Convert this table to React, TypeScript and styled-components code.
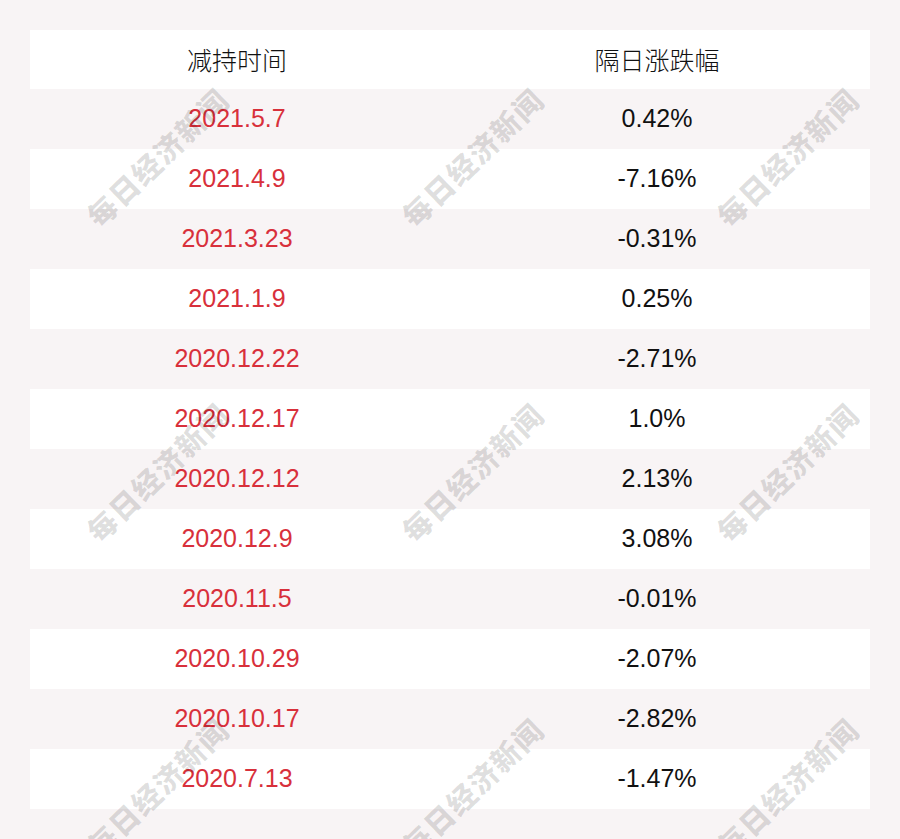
import React from "react";
import styled, { createGlobalStyle } from "styled-components";

const Global = createGlobalStyle`
  html, body { margin: 0; padding: 0; background: #f8f4f5; }
  body { font-family: "Liberation Sans", Arial, "Noto Sans CJK SC", sans-serif; }
`;

const Page = styled.div`
  position: relative;
  width: 900px;
  height: 839px;
  padding: 30px;
  box-sizing: border-box;
  background: #f8f4f5;
  overflow: hidden;
`;

const Table = styled.div`
  display: grid;
  grid-template-columns: 414px 1fr;
  width: 840px;
`;

const Cell = styled.div<{ $white: boolean; $head?: boolean }>`
  height: ${(p) => (p.$head ? 59 : 60)}px;
  box-sizing: border-box;
  padding-bottom: 2px;
  display: flex;
  align-items: center;
  justify-content: center;
  background: ${(p) => (p.$white ? "#ffffff" : "transparent")};
  font-size: 25px;
  font-weight: ${(p) => (p.$head ? 300 : 400)};
  font-family: "Liberation Sans", Arial, "Noto Sans CJK SC", sans-serif;
  color: #111;
`;

const DateText = styled.span`
  color: #d8303b;
`;

const ValueText = styled.span`
  color: #111;
`;

const Mark = styled.div<{ $x: number; $y: number }>`
  position: absolute;
  left: ${(p) => p.$x}px;
  top: ${(p) => p.$y}px;
  transform: translate(-50%, -50%) rotate(-44deg);
  font-family: "Noto Sans CJK SC", sans-serif;
  font-weight: 900;
  font-size: 29px;
  letter-spacing: 1.5px;
  white-space: nowrap;
  color: rgba(0, 0, 0, 0.13);
  pointer-events: none;
  line-height: 1;
`;

const rows: [string, string][] = [
  ["2021.5.7", "0.42%"],
  ["2021.4.9", "-7.16%"],
  ["2021.3.23", "-0.31%"],
  ["2021.1.9", "0.25%"],
  ["2020.12.22", "-2.71%"],
  ["2020.12.17", "1.0%"],
  ["2020.12.12", "2.13%"],
  ["2020.12.9", "3.08%"],
  ["2020.11.5", "-0.01%"],
  ["2020.10.29", "-2.07%"],
  ["2020.10.17", "-2.82%"],
  ["2020.7.13", "-1.47%"],
];

const marks: [number, number][] = [];
[157, 472, 787].forEach((y) => [157, 472, 787].forEach((x) => marks.push([x, y])));

export default function App() {
  return (
    <Page>
      <Global />
      <Table>
        <Cell $white $head>减持时间</Cell>
        <Cell $white $head>隔日涨跌幅</Cell>
        {rows.map(([d, v], i) => (
          <React.Fragment key={d}>
            <Cell $white={i % 2 === 1}>
              <DateText>{d}</DateText>
            </Cell>
            <Cell $white={i % 2 === 1}>
              <ValueText>{v}</ValueText>
            </Cell>
          </React.Fragment>
        ))}
      </Table>
      {marks.map(([x, y], i) => (
        <Mark key={i} $x={x} $y={y}>
          每日经济新闻
        </Mark>
      ))}
    </Page>
  );
}
